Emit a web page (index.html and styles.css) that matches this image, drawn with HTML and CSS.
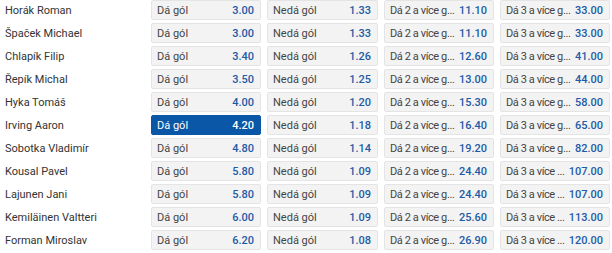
FILE: index.html
```html
<!DOCTYPE html>
<html lang="cs">
<head>
<meta charset="utf-8">
<link rel="stylesheet" href="styles.css">
</head>
<body>
<div class="table">
  <div class="row"><div class="name">Horák Roman</div><div class="btn"><span class="lbl">Dá gól</span><span class="odd">3.00</span></div><div class="btn"><span class="lbl">Nedá gól</span><span class="odd">1.33</span></div><div class="btn"><span class="lbl cut">Dá 2 a více g...</span><span class="odd">11.10</span></div><div class="btn"><span class="lbl cut">Dá 3 a více g...</span><span class="odd">33.00</span></div></div>
  <div class="row"><div class="name">Špaček Michael</div><div class="btn"><span class="lbl">Dá gól</span><span class="odd">3.00</span></div><div class="btn"><span class="lbl">Nedá gól</span><span class="odd">1.33</span></div><div class="btn"><span class="lbl cut">Dá 2 a více g...</span><span class="odd">11.10</span></div><div class="btn"><span class="lbl cut">Dá 3 a více g...</span><span class="odd">33.00</span></div></div>
  <div class="row"><div class="name">Chlapík Filip</div><div class="btn"><span class="lbl">Dá gól</span><span class="odd">3.40</span></div><div class="btn"><span class="lbl">Nedá gól</span><span class="odd">1.26</span></div><div class="btn"><span class="lbl cut">Dá 2 a více g...</span><span class="odd">12.60</span></div><div class="btn"><span class="lbl cut">Dá 3 a více g...</span><span class="odd">41.00</span></div></div>
  <div class="row"><div class="name">Řepík Michal</div><div class="btn"><span class="lbl">Dá gól</span><span class="odd">3.50</span></div><div class="btn"><span class="lbl">Nedá gól</span><span class="odd">1.25</span></div><div class="btn"><span class="lbl cut">Dá 2 a více g...</span><span class="odd">13.00</span></div><div class="btn"><span class="lbl cut">Dá 3 a více g...</span><span class="odd">44.00</span></div></div>
  <div class="row"><div class="name">Hyka Tomáš</div><div class="btn"><span class="lbl">Dá gól</span><span class="odd">4.00</span></div><div class="btn"><span class="lbl">Nedá gól</span><span class="odd">1.20</span></div><div class="btn"><span class="lbl cut">Dá 2 a více g...</span><span class="odd">15.30</span></div><div class="btn"><span class="lbl cut">Dá 3 a více g...</span><span class="odd">58.00</span></div></div>
  <div class="row"><div class="name">Irving Aaron</div><div class="btn selected"><span class="lbl">Dá gól</span><span class="odd">4.20</span></div><div class="btn"><span class="lbl">Nedá gól</span><span class="odd">1.18</span></div><div class="btn"><span class="lbl cut">Dá 2 a více g...</span><span class="odd">16.40</span></div><div class="btn"><span class="lbl cut">Dá 3 a více g...</span><span class="odd">65.00</span></div></div>
  <div class="row"><div class="name">Sobotka Vladimír</div><div class="btn"><span class="lbl">Dá gól</span><span class="odd">4.80</span></div><div class="btn"><span class="lbl">Nedá gól</span><span class="odd">1.14</span></div><div class="btn"><span class="lbl cut">Dá 2 a více g...</span><span class="odd">19.20</span></div><div class="btn"><span class="lbl cut">Dá 3 a více g...</span><span class="odd">82.00</span></div></div>
  <div class="row"><div class="name">Kousal Pavel</div><div class="btn"><span class="lbl">Dá gól</span><span class="odd">5.80</span></div><div class="btn"><span class="lbl">Nedá gól</span><span class="odd">1.09</span></div><div class="btn"><span class="lbl cut">Dá 2 a více g...</span><span class="odd">24.40</span></div><div class="btn"><span class="lbl cut">Dá 3 a více ...</span><span class="odd">107.00</span></div></div>
  <div class="row"><div class="name">Lajunen Jani</div><div class="btn"><span class="lbl">Dá gól</span><span class="odd">5.80</span></div><div class="btn"><span class="lbl">Nedá gól</span><span class="odd">1.09</span></div><div class="btn"><span class="lbl cut">Dá 2 a více g...</span><span class="odd">24.40</span></div><div class="btn"><span class="lbl cut">Dá 3 a více ...</span><span class="odd">107.00</span></div></div>
  <div class="row"><div class="name">Kemiläinen Valtteri</div><div class="btn"><span class="lbl">Dá gól</span><span class="odd">6.00</span></div><div class="btn"><span class="lbl">Nedá gól</span><span class="odd">1.09</span></div><div class="btn"><span class="lbl cut">Dá 2 a více g...</span><span class="odd">25.60</span></div><div class="btn"><span class="lbl cut">Dá 3 a více ...</span><span class="odd">113.00</span></div></div>
  <div class="row"><div class="name">Forman Miroslav</div><div class="btn"><span class="lbl">Dá gól</span><span class="odd">6.20</span></div><div class="btn"><span class="lbl">Nedá gól</span><span class="odd">1.08</span></div><div class="btn"><span class="lbl cut">Dá 2 a více g...</span><span class="odd">26.90</span></div><div class="btn"><span class="lbl cut">Dá 3 a více ...</span><span class="odd">120.00</span></div></div>
</div>
</body>
</html>
```
FILE: styles.css
```css
html, body {
  margin: 0;
  padding: 0;
  background: #ffffff;
}
body {
  font-family: Roboto, "Liberation Sans", Arial, sans-serif;
  font-size: 11px;
  color: #333333;
}
.table {
  display: flex;
  flex-direction: column;
  gap: 3px;
}
.row {
  display: grid;
  grid-template-columns: 145px 110px 111px 110px 110px;
  column-gap: 6px;
  height: 20px;
  align-items: center;
}
.name {
  padding-left: 5px;
  white-space: nowrap;
  overflow: hidden;
  color: #333333;
}
.btn {
  box-sizing: border-box;
  height: 20px;
  display: flex;
  align-items: center;
  justify-content: space-between;
  gap: 2px;
  padding: 0 6px 0 5px;
  background: #f3f3f3;
  border: 1px solid #e4e4e4;
  border-radius: 2px;
  color: #444444;
}
.lbl {
  white-space: nowrap;
}
.lbl.cut {
  letter-spacing: -0.4px;
}
.odd {
  flex: none;
  color: #1d5ba6;
  font-weight: 500;
}
.btn.selected {
  background: #0a56a7;
  border-color: #0a56a7;
  color: #ffffff;
}
.btn.selected .odd {
  color: #ffffff;
}
```
